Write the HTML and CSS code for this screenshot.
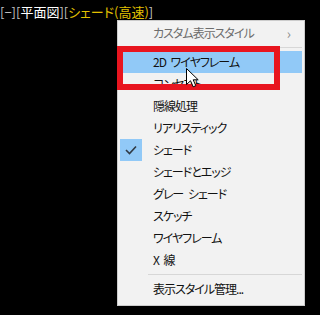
FILE: index.html
```html
<!DOCTYPE html>
<html lang="ja">
<head>
    <meta charset="UTF-8">
    <title>表示スタイル</title>
    <link rel="stylesheet" href="styles.css">
</head>
<body>

    <div class="viewport-label">
        <span class="dim">[−]</span><span class="dim">[</span><span class="view">平面図</span><span class="dim">][</span><span class="style">シェード(高速)</span><span class="dim">]</span>
    </div>

    <div class="menu">
        <div class="item disabled">カスタム表示スタイル<span class="arrow">›</span></div>
        <div class="sep"></div>
        <div class="item hover">2D ワイヤフレーム</div>
        <div class="item">コンセプト</div>
        <div class="item">隠線処理</div>
        <div class="item">リアリスティック</div>
        <div class="item checked"><span class="check"><svg width="12" height="10" viewBox="0 0 12 10"><path d="M1 5 L4.5 8.5 L11 1.5" fill="none" stroke="#303a44" stroke-width="1.6"/></svg></span>シェード</div>
        <div class="item">シェードとエッジ</div>
        <div class="item">グレー シェード</div>
        <div class="item">スケッチ</div>
        <div class="item">ワイヤフレーム</div>
        <div class="item">X 線</div>
        <div class="sep"></div>
        <div class="item">表示スタイル管理...</div>
    </div>

    <div class="mark"></div>

    <svg class="cursor" width="13" height="20" viewBox="0 0 13 20">
        <path d="M0.5 0.5 L0.5 16.5 L4.5 12.8 L7.2 18.8 L9.8 17.7 L7.2 11.8 L12.2 11.8 Z" fill="#fff" stroke="#000" stroke-width="1"/>
    </svg>

</body>
</html>
```

FILE: styles.css
```css
body {
    margin: 0;
    width: 320px;
    height: 315px;
    background: #000;
    font-family: "Noto Sans CJK JP", "Noto Sans", sans-serif;
    font-feature-settings: "palt";
    position: relative;
    overflow: hidden;
}

.viewport-label {
    padding: 3px 0 0 0;
    font-size: 13px;
    line-height: 18px;
    white-space: nowrap;
}

.dim {
    color: #c4c4c4;
}

.view {
    color: #fff;
}

.style {
    color: #e2c000;
}

.menu {
    position: absolute;
    left: 117px;
    top: 20px;
    width: 186px;
    height: 282px;
    padding: 1px 0;
    background: #f2f2f2;
    border: 1px solid #cccccc;
    box-sizing: content-box;
}

.item {
    position: relative;
    height: 22px;
    line-height: 22px;
    margin: 0 2px;
    padding-left: 33px;
    font-size: 12px;
    letter-spacing: -1px;
    word-spacing: 3px;
    color: #111;
    white-space: nowrap;
}

.item.disabled {
    color: #6d6d6d;
}

.item.hover {
    background: #91c9f7;
}

.arrow {
    position: absolute;
    right: 12px;
    top: 0;
    color: #8a8a8a;
    font-size: 14px;
}

.check {
    position: absolute;
    left: 0;
    top: 0;
    width: 22px;
    height: 22px;
    background: #91c9f7;
    display: flex;
    align-items: center;
    justify-content: center;
}

.sep {
    height: 1px;
    margin: 3px 2px 3px 30px;
    background: #d7d7d7;
}

.mark {
    position: absolute;
    left: 117px;
    top: 46px;
    width: 151px;
    height: 32px;
    border: 6px solid #e8151f;
}

.cursor {
    position: absolute;
    left: 186px;
    top: 68px;
}
```
